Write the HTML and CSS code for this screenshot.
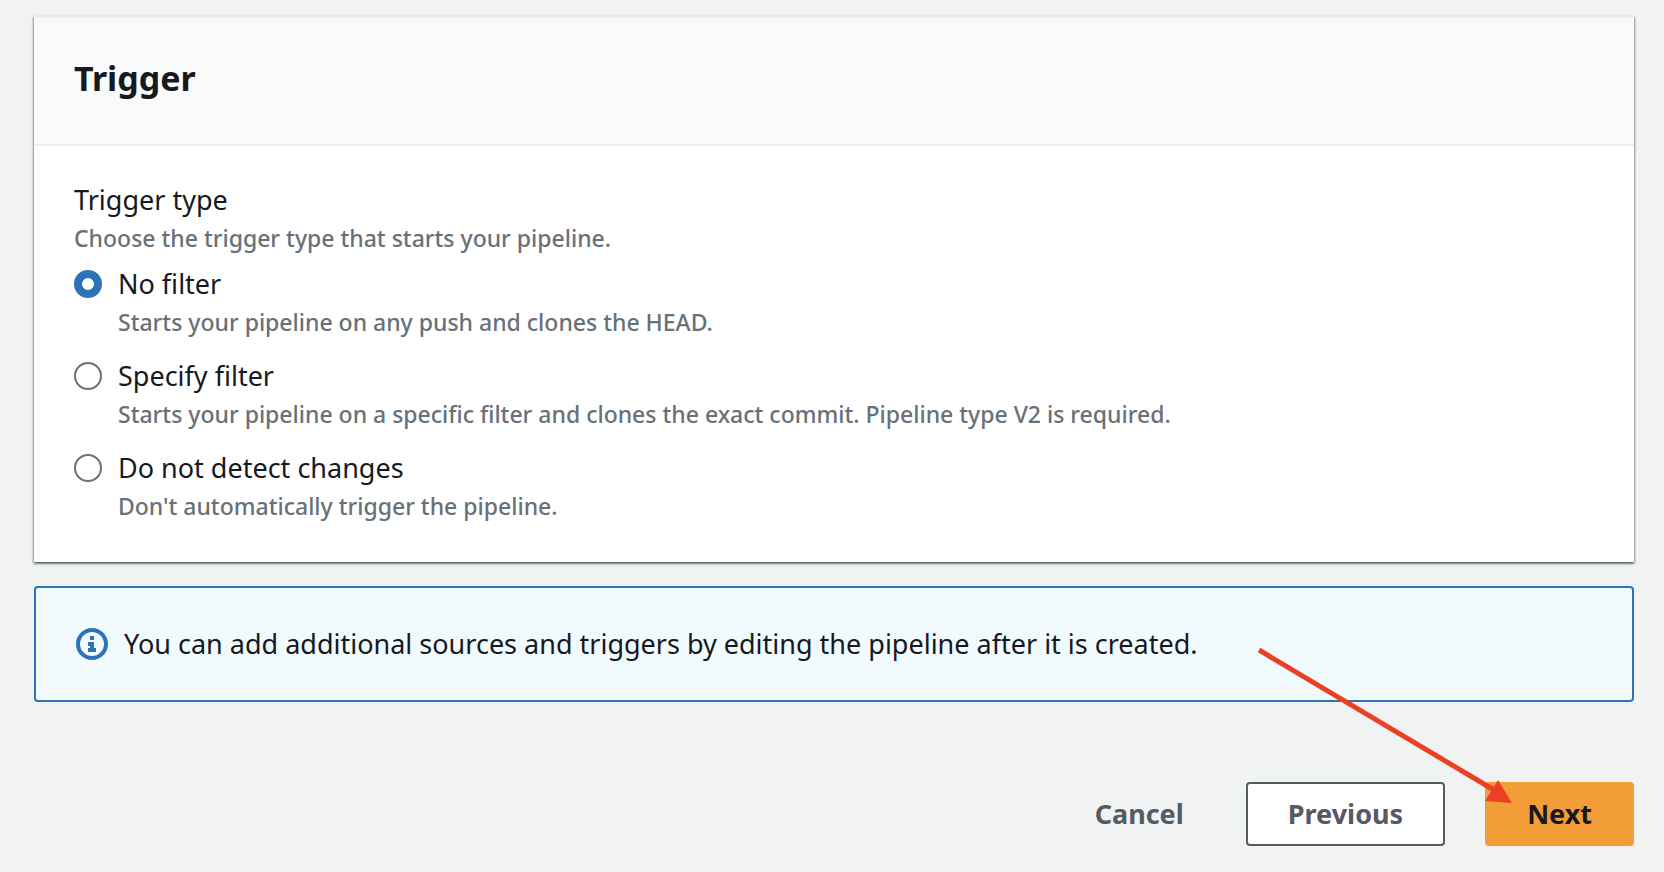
FILE: index.html
```html
<!DOCTYPE html>
<html lang="en">
<head>
<meta charset="utf-8">
<meta name="viewport" content="width=device-width, initial-scale=1">
<title>Trigger</title>
<link rel="stylesheet" href="styles.css">
</head>
<body>
<main class="page">
  <section class="card">
    <header class="card-header">
      <h2 class="card-title">Trigger</h2>
    </header>
    <fieldset class="card-body">
      <legend class="label">Trigger type</legend>
      <p class="hint">Choose the trigger type that starts your pipeline.</p>
      <div class="options">
        <div class="option">
          <input class="radio" type="radio" name="trigger" id="no-filter" aria-describedby="no-filter-hint" checked>
          <div>
            <label class="label" for="no-filter">No filter</label>
            <p class="hint" id="no-filter-hint">Starts your pipeline on any push and clones the HEAD.</p>
          </div>
        </div>
        <div class="option">
          <input class="radio" type="radio" name="trigger" id="specify-filter" aria-describedby="specify-filter-hint">
          <div>
            <label class="label" for="specify-filter">Specify filter</label>
            <p class="hint" id="specify-filter-hint">Starts your pipeline on a specific filter and clones the exact commit. Pipeline type V2 is required.</p>
          </div>
        </div>
        <div class="option">
          <input class="radio" type="radio" name="trigger" id="no-detect" aria-describedby="no-detect-hint">
          <div>
            <label class="label" for="no-detect">Do not detect changes</label>
            <p class="hint" id="no-detect-hint">Don't automatically trigger the pipeline.</p>
          </div>
        </div>
      </div>
    </fieldset>
  </section>

  <div class="alert" role="note">
    <svg class="alert-icon" viewBox="0 0 32 32" aria-hidden="true">
      <circle cx="16" cy="16" r="14" fill="none" stroke="currentColor" stroke-width="4"/>
      <path fill="currentColor" d="M14 8h4v4h-4zM12 14h6v6h2v4h-8v-4h2v-2h-2z"/>
    </svg>
    <p class="alert-text">You can add additional sources and triggers by editing the pipeline after it is created.</p>
  </div>

  <div class="actions">
    <button class="button button-link" type="button">Cancel</button>
    <button class="button button-normal" type="button">Previous</button>
    <div class="next">
      <button class="button button-primary" type="button">Next</button>
      <svg class="arrow" viewBox="0 0 254 156" aria-hidden="true">
        <path d="M1 3L236 143" stroke="#eb4026" stroke-width="5" fill="none"/>
        <path d="M240 133L254 156L227 154z" fill="#eb4026"/>
      </svg>
    </div>
  </div>
</main>
</body>
</html>
```

FILE: styles.css
```css
* {
  box-sizing: border-box;
}

body {
  margin: 0;
  background: #f1f3f3;
  color: #16191f;
  font-family: "Noto Sans", "Open Sans", sans-serif;
  font-size: 27px;
  line-height: 44px;
}

.page {
  display: flex;
  flex-direction: column;
  padding: 16px 30px 26px 34px;
}

.card {
  background: #fff;
  border-top: 2px solid #eaeded;
  box-shadow: 0 2px 2px 0 rgba(0, 28, 36, 0.4), 1px 1px 2px 0 rgba(0, 28, 36, 0.3), -1px 1px 2px 0 rgba(0, 28, 36, 0.3);
}

.card-header {
  padding: 38px 40px 44px;
  background: #fafafa;
  border-bottom: 2px solid #eaeded;
}

.card-title {
  margin: 0;
  font-size: 34px;
  line-height: 44px;
  font-weight: 700;
}

.card-body {
  margin: 0;
  padding: 32px 40px 36px;
  border: 0;
}

.card-body legend {
  float: left;
  width: 100%;
  padding: 0;
}

.label {
  display: block;
}

.hint {
  clear: both;
  margin: 0;
  padding-bottom: 4px;
  color: #687078;
  font-size: 23px;
  font-weight: 500;
  line-height: 32px;
}

.options {
  display: grid;
  gap: 12px;
  padding-top: 4px;
}

.option {
  display: flex;
  gap: 16px;
}

.radio {
  appearance: none;
  flex: none;
  width: 28px;
  height: 28px;
  margin: 8px 0;
  border: 2px solid #687078;
  border-radius: 50%;
  background: #fff;
}

.radio:checked {
  border: 8px solid #2e72b8;
}

.alert {
  display: flex;
  align-items: center;
  gap: 16px;
  margin-top: 24px;
  padding: 34px 40px;
  border: 2px solid #2e72b8;
  border-radius: 4px;
  background: #f1fafd;
}

.alert-icon {
  flex: none;
  width: 32px;
  height: 32px;
  color: #2e72b8;
}

.alert-text {
  margin: 0;
}

.actions {
  display: flex;
  justify-content: flex-end;
  margin-top: 80px;
}

.button {
  height: 64px;
  padding: 0 40px;
  border: 2px solid transparent;
  border-radius: 4px;
  background: transparent;
  color: #545b64;
  font: inherit;
  font-weight: 700;
}

.button-link {
  margin-right: 20px;
}

.button-normal {
  margin-right: 40px;
  border-color: #545b64;
  background: #fff;
}

.button-primary {
  background: #f29d38;
  color: #16191f;
}

.next {
  position: relative;
}

.arrow {
  position: absolute;
  right: 122px;
  bottom: 43px;
  width: 254px;
  height: 156px;
  pointer-events: none;
}
```
